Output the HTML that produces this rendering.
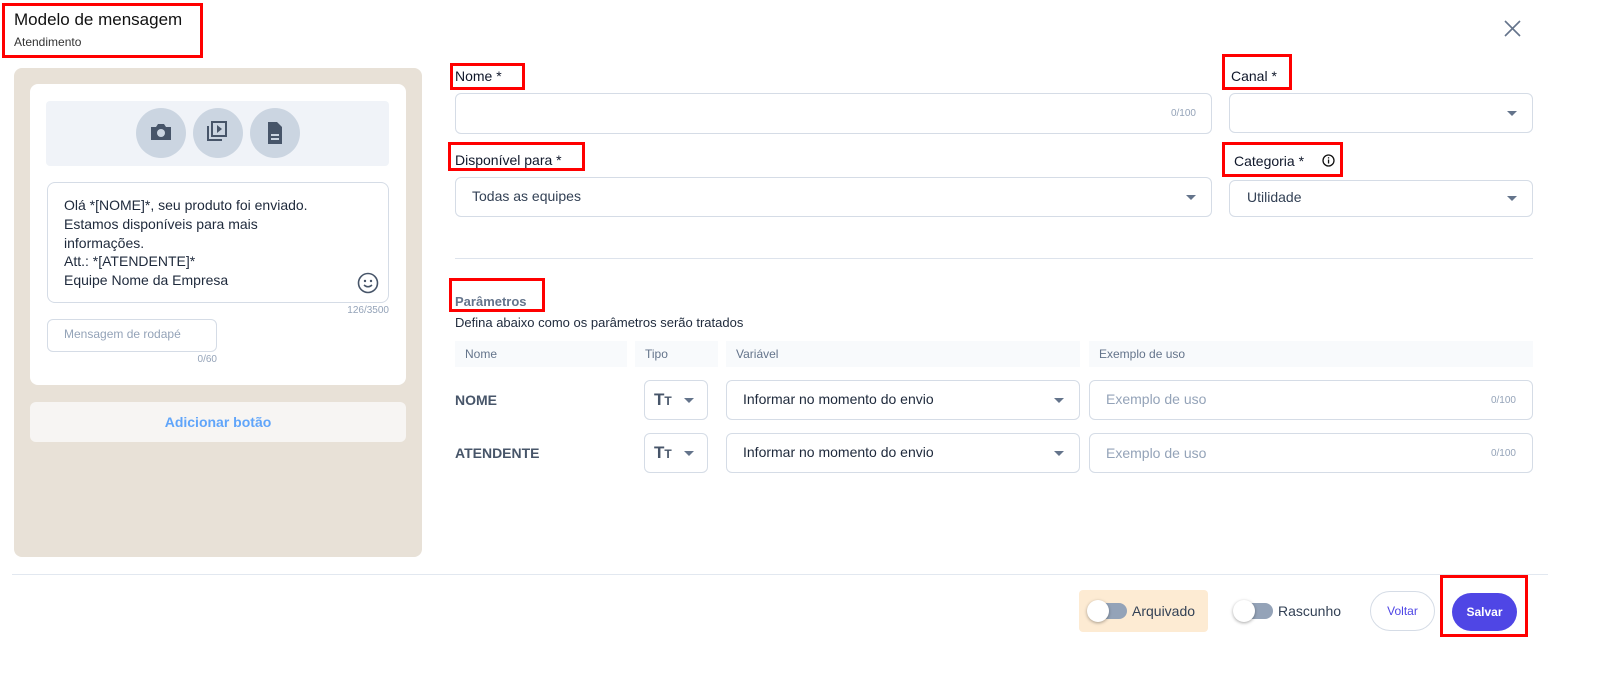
<!DOCTYPE html>
<html><head><meta charset="utf-8"><style>
*{box-sizing:border-box;margin:0;padding:0}
body{width:1600px;height:676px;background:#fff;font-family:"Liberation Sans",sans-serif;color:#1e293b;position:relative;overflow:hidden}
.a{position:absolute}
.red{position:absolute;border:3px solid #f00}
.inp{position:absolute;border:1px solid #d5dce6;border-radius:6px;background:#fff}
.lbl{position:absolute;font-size:14px;color:#0f172a}
.caret{position:absolute;width:0;height:0;border-left:5px solid transparent;border-right:5px solid transparent;border-top:5px solid #64748b}
.th{position:absolute;top:341px;height:26px;background:#f8fafc;font-size:12px;color:#64748b;line-height:26px;padding-left:10px}
.circ{position:absolute;width:50px;height:50px;border-radius:50%;background:#cbd5e1;top:108px}
.tog{position:absolute;width:38px;height:16px;border-radius:8px;background:#94a3b8}
.tog:before{content:"";position:absolute;left:-2px;top:-3px;width:22px;height:22px;border-radius:50%;background:#fff;box-shadow:0 1px 3px rgba(0,0,0,.35)}
</style></head><body>
<div class="a" style="left:14px;top:10px;font-size:17px;color:#111">Modelo de mensagem</div>
<div class="a" style="left:14px;top:35px;font-size:12px;color:#333">Atendimento</div>
<svg class="a" style="left:1504px;top:20px" width="17" height="17" viewBox="0 0 17 17"><path d="M1 1L16 16M16 1L1 16" stroke="#64748b" stroke-width="1.6"/></svg>

<div class="a" style="left:14px;top:68px;width:408px;height:489px;background:#e8e1d7;border-radius:8px"></div>
<div class="a" style="left:30px;top:84px;width:376px;height:301px;background:#fff;border-radius:8px"></div>
<div class="a" style="left:46px;top:101px;width:343px;height:65px;background:#f0f3f8;border-radius:4px"></div>
<div class="circ" style="left:136px"><svg width="50" height="50" viewBox="0 0 50 50"><path d="M15 19h5l2-3h6l2 3h5v13H15z" fill="#475569"/><circle cx="25" cy="25" r="4" fill="#cbd5e1"/></svg></div>
<div class="circ" style="left:193px"><svg width="50" height="50" viewBox="0 0 50 50"><rect x="19" y="14" width="14" height="14" fill="none" stroke="#475569" stroke-width="2"/><path d="M15 18v14h14" fill="none" stroke="#475569" stroke-width="2"/><path d="M24 17v8l5-4z" fill="#475569"/></svg></div>
<div class="circ" style="left:250px"><svg width="50" height="50" viewBox="0 0 50 50"><path d="M18 14h9l5 5v17H18z" fill="#475569"/><rect x="21" y="26" width="8" height="2" fill="#cbd5e1"/><rect x="21" y="30" width="8" height="2" fill="#cbd5e1"/></svg></div>
<div class="inp" style="left:47px;top:182px;width:342px;height:121px;border-radius:8px"></div>
<div class="a" style="left:64px;top:196px;font-size:14px;line-height:18.8px;color:#1e293b">Olá *[NOME]*, seu produto foi enviado.<br>Estamos disponíveis para mais<br>informações.<br>Att.: *[ATENDENTE]*<br>Equipe Nome da Empresa</div>
<svg class="a" style="left:357px;top:272px" width="22" height="22" viewBox="0 0 22 22"><circle cx="11" cy="11" r="9.5" fill="none" stroke="#475569" stroke-width="1.6"/><circle cx="8" cy="9" r="1.2" fill="#475569"/><circle cx="14" cy="9" r="1.2" fill="#475569"/><path d="M7 13q4 3.5 8 0" fill="none" stroke="#475569" stroke-width="1.5"/></svg>
<div class="a" style="left:330px;top:305px;width:59px;text-align:right;font-size:10px;color:#94a3b8">126/3500</div>
<div class="inp" style="left:47px;top:319px;width:170px;height:33px;border-radius:6px"></div>
<div class="a" style="left:64px;top:327px;font-size:12px;color:#94a3b8">Mensagem de rodapé</div>
<div class="a" style="left:180px;top:327px;width:37px;text-align:right;font-size:10px;color:#94a3b8;top:354px">0/60</div>
<div class="a" style="left:30px;top:402px;width:376px;height:40px;background:#f7f5f3;border-radius:6px;text-align:center;line-height:40px;font-size:14px;font-weight:bold;color:#60a5fa">Adicionar botão</div>

<div class="lbl" style="left:455px;top:68px">Nome *</div>
<div class="inp" style="left:455px;top:93px;width:757px;height:41px"></div>
<div class="a" style="left:1160px;top:108px;width:36px;text-align:right;font-size:10px;color:#94a3b8">0/100</div>
<div class="lbl" style="left:1231px;top:68px">Canal *</div>
<div class="inp" style="left:1229px;top:93px;width:304px;height:40px"></div>
<div class="caret" style="left:1507px;top:111px"></div>

<div class="lbl" style="left:455px;top:152px">Disponível para *</div>
<div class="inp" style="left:455px;top:177px;width:757px;height:40px"></div>
<div class="a" style="left:472px;top:188px;font-size:14px;color:#334155">Todas as equipes</div>
<div class="caret" style="left:1186px;top:195px"></div>
<div class="lbl" style="left:1234px;top:153px">Categoria *</div>
<svg class="a" style="left:1322px;top:154px" width="13" height="13" viewBox="0 0 13 13"><circle cx="6.5" cy="6.5" r="5.5" fill="none" stroke="#111" stroke-width="1.3"/><rect x="5.9" y="5.5" width="1.3" height="4" fill="#111"/><rect x="5.9" y="3.2" width="1.3" height="1.3" fill="#111"/></svg>
<div class="inp" style="left:1229px;top:180px;width:304px;height:37px"></div>
<div class="a" style="left:1247px;top:189px;font-size:14px;color:#334155">Utilidade</div>
<div class="caret" style="left:1507px;top:196px"></div>

<div class="a" style="left:455px;top:258px;width:1078px;height:1px;background:#dde3ec"></div>
<div class="a" style="left:455px;top:294px;font-size:13px;font-weight:bold;color:#64748b">Parâmetros</div>
<div class="a" style="left:455px;top:315px;font-size:13px;color:#1e293b">Defina abaixo como os parâmetros serão tratados</div>
<div class="th" style="left:455px;width:172px">Nome</div>
<div class="th" style="left:635px;width:83px">Tipo</div>
<div class="th" style="left:726px;width:354px">Variável</div>
<div class="th" style="left:1089px;width:444px">Exemplo de uso</div>

<div class="a" style="left:455px;top:392px;font-size:14px;font-weight:bold;color:#475569">NOME</div>
<div class="inp" style="left:644px;top:380px;width:64px;height:40px"></div>
<div class="a" style="left:654px;top:390px;font-size:17px;font-weight:bold;color:#475569">T<span style="font-size:12px">T</span></div>
<div class="caret" style="left:684px;top:398px"></div>
<div class="inp" style="left:726px;top:380px;width:354px;height:40px"></div>
<div class="a" style="left:743px;top:391px;font-size:14px;color:#1e293b">Informar no momento do envio</div>
<div class="caret" style="left:1054px;top:398px"></div>
<div class="inp" style="left:1089px;top:380px;width:444px;height:40px"></div>
<div class="a" style="left:1106px;top:391px;font-size:14px;color:#94a3b8">Exemplo de uso</div>
<div class="a" style="left:1480px;top:395px;width:36px;text-align:right;font-size:10px;color:#94a3b8">0/100</div>

<div class="a" style="left:455px;top:445px;font-size:14px;font-weight:bold;color:#475569">ATENDENTE</div>
<div class="inp" style="left:644px;top:433px;width:64px;height:40px"></div>
<div class="a" style="left:654px;top:443px;font-size:17px;font-weight:bold;color:#475569">T<span style="font-size:12px">T</span></div>
<div class="caret" style="left:684px;top:451px"></div>
<div class="inp" style="left:726px;top:433px;width:354px;height:40px"></div>
<div class="a" style="left:743px;top:444px;font-size:14px;color:#1e293b">Informar no momento do envio</div>
<div class="caret" style="left:1054px;top:451px"></div>
<div class="inp" style="left:1089px;top:433px;width:444px;height:40px"></div>
<div class="a" style="left:1106px;top:445px;font-size:14px;color:#94a3b8">Exemplo de uso</div>
<div class="a" style="left:1480px;top:448px;width:36px;text-align:right;font-size:10px;color:#94a3b8">0/100</div>

<div class="a" style="left:12px;top:574px;width:1536px;height:1px;background:#e2e8f0"></div>
<div class="a" style="left:1079px;top:590px;width:129px;height:42px;background:#fdebd3;border-radius:4px"></div>
<div class="tog" style="left:1089px;top:603px"></div>
<div class="a" style="left:1132px;top:603px;font-size:14px;color:#334155">Arquivado</div>
<div class="tog" style="left:1235px;top:603px"></div>
<div class="a" style="left:1278px;top:603px;font-size:14px;color:#334155">Rascunho</div>
<div class="a" style="left:1370px;top:591px;width:65px;height:40px;border:1px solid #d5dce6;border-radius:20px;text-align:center;line-height:38px;font-size:12px;color:#4f46e5">Voltar</div>
<div class="a" style="left:1452px;top:593px;width:65px;height:38px;background:#4f46e5;border-radius:19px;text-align:center;line-height:38px;font-size:12px;font-weight:bold;color:#fff">Salvar</div>

<div class="red" style="left:2px;top:3px;width:201px;height:55px"></div>
<div class="red" style="left:450px;top:63px;width:75px;height:27px"></div>
<div class="red" style="left:1222px;top:54px;width:70px;height:36px"></div>
<div class="red" style="left:448px;top:142px;width:137px;height:29px"></div>
<div class="red" style="left:1222px;top:142px;width:121px;height:35px"></div>
<div class="red" style="left:449px;top:278px;width:96px;height:34px"></div>
<div class="red" style="left:1440px;top:575px;width:88px;height:62px"></div>
</body></html>
